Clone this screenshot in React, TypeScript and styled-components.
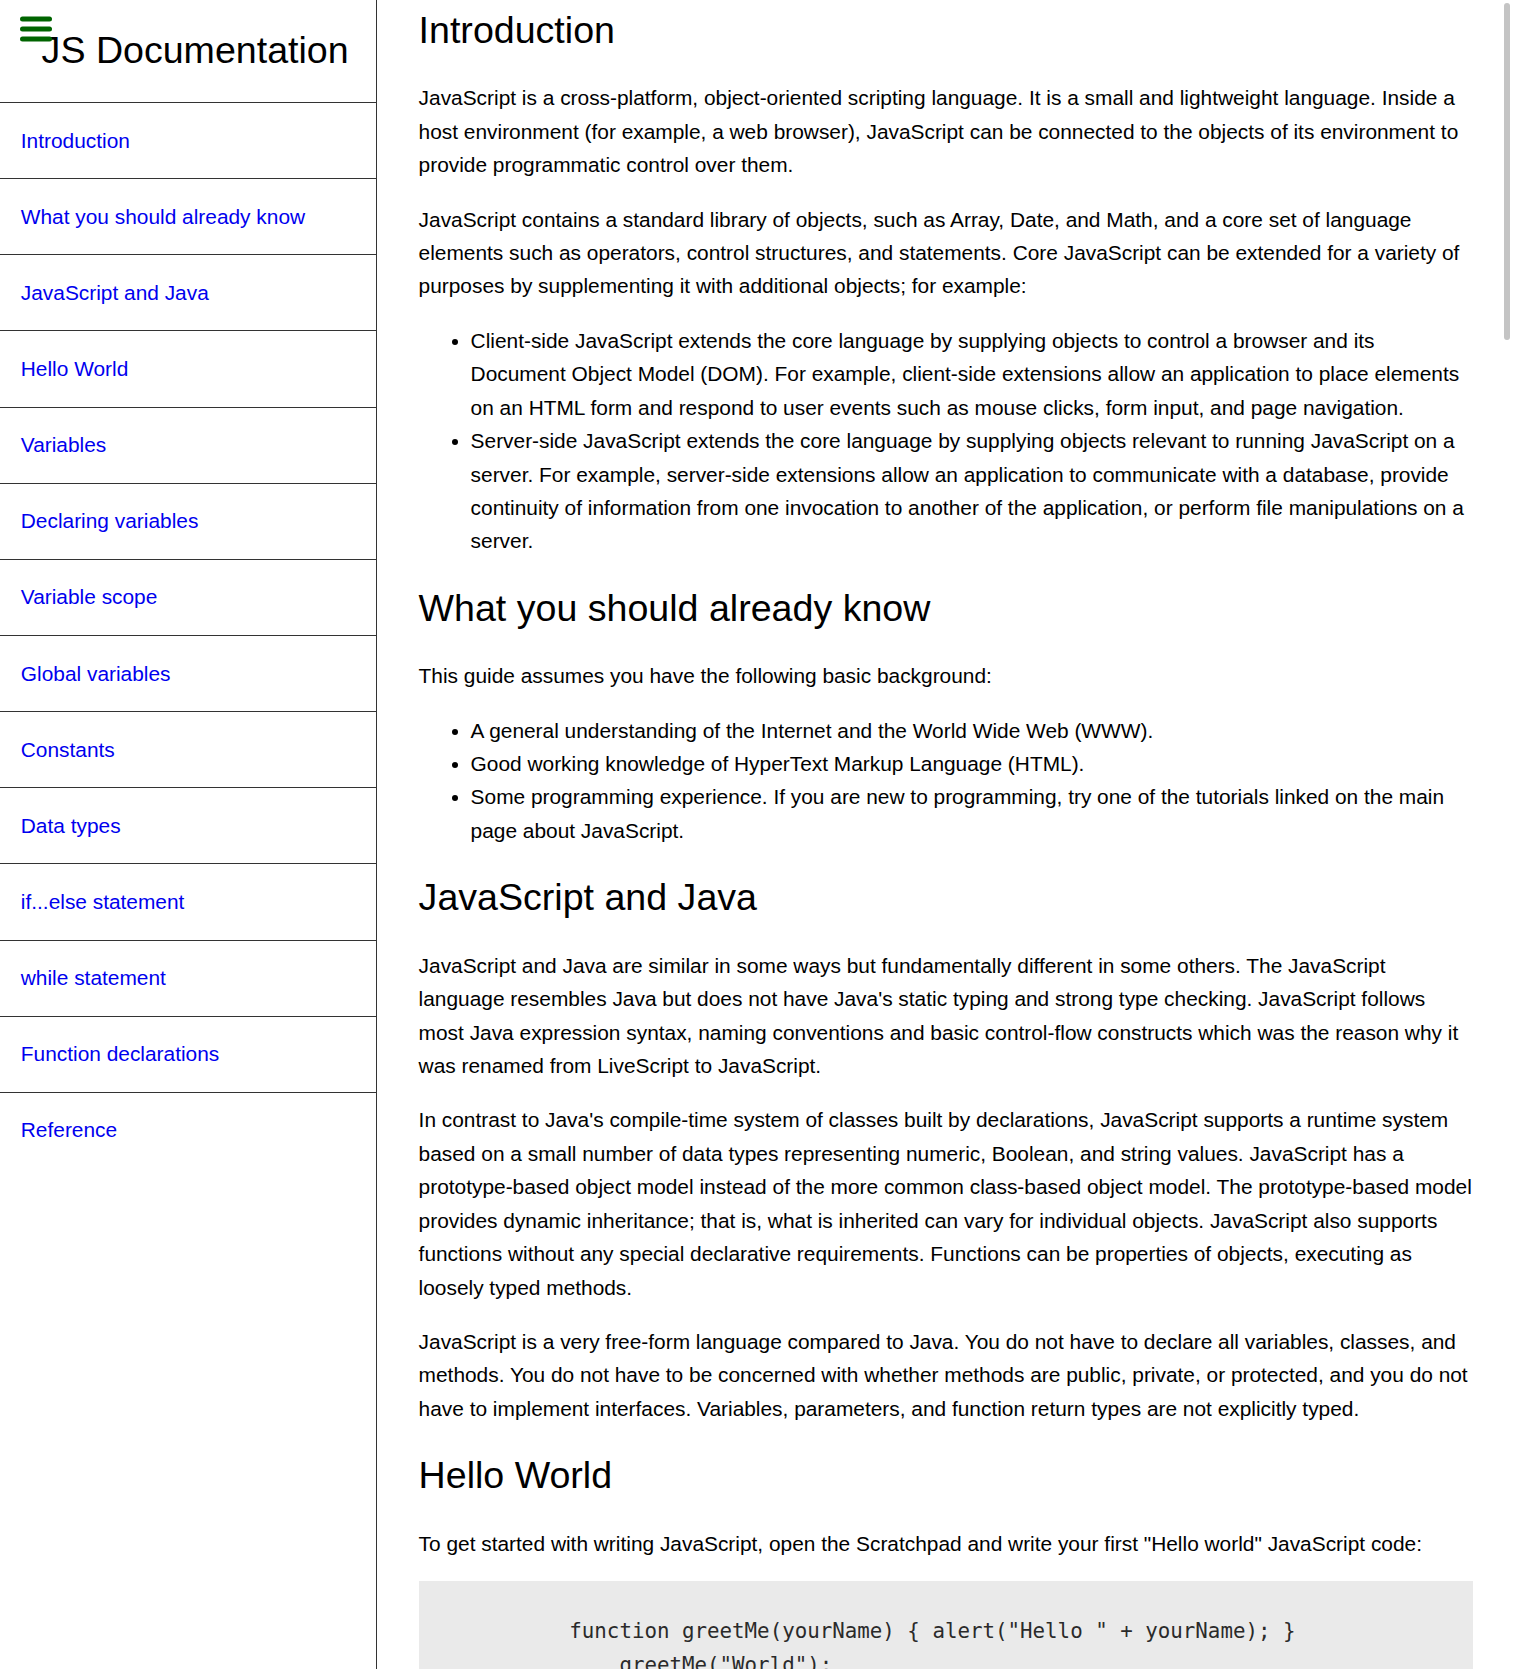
import React from "react";
import styled, { createGlobalStyle } from "styled-components";

const GlobalStyle = createGlobalStyle`
  html, body {
    margin: 0;
    padding: 0;
    height: 100%;
    overflow: hidden;
    background: #ffffff;
  }
  body {
    font-family: "Liberation Sans", Arial, sans-serif;
    color: #000000;
  }
  #root {
    height: 100%;
  }
`;

const Page = styled.div`
  display: flex;
  height: 100vh;
  overflow: hidden;
`;

const Sidebar = styled.nav`
  position: relative;
  flex: 0 0 377px;
  box-sizing: border-box;
  height: 100%;
  border-right: 1px solid #333333;
`;

const SidebarHeader = styled.header`
  height: 102px;
  box-sizing: border-box;
  padding: 28.5px 0 0 41.6px;
`;

const Title = styled.h1`
  margin: 0;
  font-size: 37.58px;
  font-weight: 400;
  line-height: normal;
  white-space: nowrap;
`;

const MenuButton = styled.button`
  position: absolute;
  top: 14px;
  left: 18px;
  width: 36px;
  height: 30px;
  padding: 0;
  border: 0;
  background: transparent;
  display: block;
  cursor: pointer;
`;

const NavList = styled.ul`
  list-style: none;
  margin: 0;
  padding: 0;
`;

const NavItem = styled.li`
  margin: 0;
`;

const NavLink = styled.a`
  display: flex;
  align-items: center;
  box-sizing: border-box;
  height: 76.15px;
  padding-left: 20.8px;
  border-top: 1px solid #333333;
  color: #0000ee;
  text-decoration: none;
  font-size: 20.88px;
  line-height: normal;
`;

const Main = styled.main`
  position: relative;
  flex: 1;
  min-width: 0;
  box-sizing: border-box;
  padding: 9px 40.9px 0 41.6px;
  overflow: hidden;
  font-size: 20.88px;
  line-height: 33.44px;
`;

const Section = styled.section`
  & + & {
    margin-top: 29px;
  }
`;

const Heading = styled.h2`
  margin: 0 0 29.4px;
  font-size: 37.58px;
  font-weight: 400;
  line-height: normal;
`;

const Paragraph = styled.p`
  margin: 20.9px 0;
`;

const List = styled.ul`
  margin: 20.9px 0;
  padding-left: 52px;
`;

const ListItem = styled.li`
  margin: 0;
`;

const CodeBlock = styled.pre`
  margin: 20.9px 0;
  padding: 34px 24px 38px 25.5px;
  background: #eaeaea;
  color: #2a2a2a;
  font-family: "Liberation Mono", "Courier New", monospace;
  font-size: 20.8px;
  line-height: 32px;
  white-space: pre;
  overflow: hidden;
`;

const ScrollThumb = styled.div`
  position: absolute;
  top: 3px;
  right: 4px;
  width: 6px;
  height: 337px;
  border-radius: 3px;
  background: #c4c4c4;
`;

const navItems = [
  "Introduction",
  "What you should already know",
  "JavaScript and Java",
  "Hello World",
  "Variables",
  "Declaring variables",
  "Variable scope",
  "Global variables",
  "Constants",
  "Data types",
  "if...else statement",
  "while statement",
  "Function declarations",
  "Reference",
];

const toId = (s: string) => s.replace(/[^A-Za-z]+/g, "_");

const helloCode =
  '          function greetMe(yourName) { alert("Hello " + yourName); }\n' +
  '              greetMe("World");';

const MenuIcon = () => (
  <svg width="36" height="30" viewBox="0 0 36 30" aria-hidden="true">
    <g stroke="#006400" strokeWidth="5" strokeLinecap="round">
      <line x1="4.5" y1="5" x2="31.5" y2="5" />
      <line x1="4.5" y1="15" x2="31.5" y2="15" />
      <line x1="4.5" y1="25" x2="31.5" y2="25" />
    </g>
  </svg>
);

export default function App() {
  return (
    <>
      <GlobalStyle />
      <Page>
        <Sidebar id="navbar">
          <SidebarHeader>
            <Title>JS Documentation</Title>
          </SidebarHeader>
          <MenuButton aria-label="Menu">
            <MenuIcon />
          </MenuButton>
          <NavList>
            {navItems.map((item) => (
              <NavItem key={item}>
                <NavLink className="nav-link" href={`#${toId(item)}`}>
                  {item}
                </NavLink>
              </NavItem>
            ))}
          </NavList>
        </Sidebar>

        <Main id="main-doc">
          <Section id="Introduction">
            <Heading>Introduction</Heading>
            <Paragraph>
              JavaScript is a cross-platform, object-oriented scripting language. It is a small and
              lightweight language. Inside a host environment (for example, a web browser), JavaScript
              can be connected to the objects of its environment to provide programmatic control over
              them.
            </Paragraph>
            <Paragraph>
              JavaScript contains a standard library of objects, such as Array, Date, and Math, and a
              core set of language elements such as operators, control structures, and statements. Core
              JavaScript can be extended for a variety of purposes by supplementing it with additional
              objects; for example:
            </Paragraph>
            <List>
              <ListItem>
                Client-side JavaScript extends the core language by supplying objects to control a
                browser and its Document Object Model (DOM). For example, client-side extensions allow an
                application to place elements on an HTML form and respond to user events such as mouse
                clicks, form input, and page navigation.
              </ListItem>
              <ListItem>
                Server-side JavaScript extends the core language by supplying objects relevant to running
                JavaScript on a server. For example, server-side extensions allow an application to
                communicate with a database, provide continuity of information from one invocation to
                another of the application, or perform file manipulations on a server.
              </ListItem>
            </List>
          </Section>

          <Section id="What_you_should_already_know">
            <Heading>What you should already know</Heading>
            <Paragraph>This guide assumes you have the following basic background:</Paragraph>
            <List>
              <ListItem>
                A general understanding of the Internet and the World Wide Web (WWW).
              </ListItem>
              <ListItem>Good working knowledge of HyperText Markup Language (HTML).</ListItem>
              <ListItem>
                Some programming experience. If you are new to programming, try one of the tutorials
                linked on the main page about JavaScript.
              </ListItem>
            </List>
          </Section>

          <Section id="JavaScript_and_Java">
            <Heading>JavaScript and Java</Heading>
            <Paragraph>
              JavaScript and Java are similar in some ways but fundamentally different in some others.
              The JavaScript language resembles Java but does not have Java's static typing and strong
              type checking. JavaScript follows most Java expression syntax, naming conventions and basic
              control-flow constructs which was the reason why it was renamed from LiveScript to
              JavaScript.
            </Paragraph>
            <Paragraph>
              In contrast to Java's compile-time system of classes built by declarations, JavaScript
              supports a runtime system based on a small number of data types representing numeric,
              Boolean, and string values. JavaScript has a prototype-based object model instead of the
              more common class-based object model. The prototype-based model provides dynamic
              inheritance; that is, what is inherited can vary for individual objects. JavaScript also
              supports functions without any special declarative requirements. Functions can be
              properties of objects, executing as loosely typed methods.
            </Paragraph>
            <Paragraph>
              JavaScript is a very free-form language compared to Java. You do not have to declare all
              variables, classes, and methods. You do not have to be concerned with whether methods are
              public, private, or protected, and you do not have to implement interfaces. Variables,
              parameters, and function return types are not explicitly typed.
            </Paragraph>
          </Section>

          <Section id="Hello_World">
            <Heading>Hello World</Heading>
            <Paragraph>
              To get started with writing JavaScript, open the Scratchpad and write your first "Hello
              world" JavaScript code:
            </Paragraph>
            <CodeBlock>
              <code>{helloCode}</code>
            </CodeBlock>
            <Paragraph>
              Select the code in the pad and hit Ctrl+R to watch it unfold in your browser!
            </Paragraph>
          </Section>

          <Section id="Variables">
            <Heading>Variables</Heading>
            <Paragraph>
              You use variables as symbolic names for values in your application. The names of
              variables, called identifiers, conform to certain rules.
            </Paragraph>
          </Section>

          <ScrollThumb aria-hidden="true" />
        </Main>
      </Page>
    </>
  );
}
